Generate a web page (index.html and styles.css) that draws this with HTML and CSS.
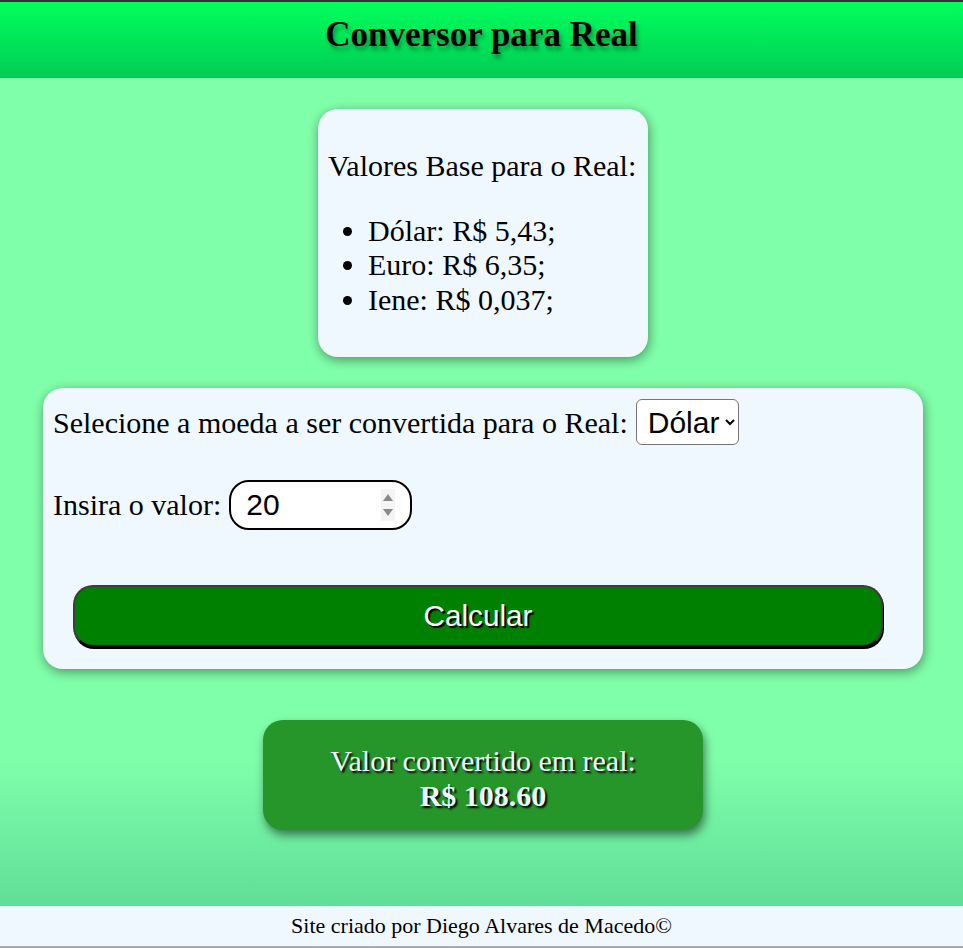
FILE: index.html
```
<!DOCTYPE html>
<html lang="pt-BR">
<head>
<meta charset="utf-8">
<title>Conversor para Real</title>
<link rel="stylesheet" href="styles.css">
</head>
<body>
<header class="topo">
  <h1 class="titulo">Conversor para Real</h1>
</header>
<main class="conteudo">
  <section class="cartao base">
    <p class="base-titulo">Valores Base para o Real:</p>
    <ul class="lista">
      <li>Dólar: R$ 5,43;</li>
      <li>Euro: R$ 6,35;</li>
      <li>Iene: R$ 0,037;</li>
    </ul>
  </section>
  <section class="cartao form">
    <div class="linha">
      <label for="moeda">Selecione a moeda a ser convertida para o Real:</label>
      <select id="moeda" class="seletor">
        <option>Dólar</option>
        <option>Euro</option>
        <option>Iene</option>
      </select>
    </div>
    <div class="linha linha-valor">
      <label for="valor">Insira o valor:</label>
      <span class="campo-wrap">
        <input id="valor" class="campo" type="number" value="20">
        <span class="giro" aria-hidden="true"><i class="seta-cima"></i><i class="seta-baixo"></i></span>
      </span>
    </div>
    <button class="botao" type="button">Calcular</button>
  </section>
  <section class="resultado">
    <div>Valor convertido em real:</div>
    <div class="valor-final">R$ 108.60</div>
  </section>
</main>
<footer class="rodape">Site criado por Diego Alvares de Macedo©</footer>
</body>
</html>
```
FILE: styles.css
```
html, body {
  margin: 0;
  padding: 0;
}
body {
  min-height: 100vh;
  display: flex;
  flex-direction: column;
  font-family: "Liberation Serif", "Times New Roman", serif;
  font-size: 30px;
  line-height: 34.5px;
  color: #000;
  background: #80ffaa;
}
.topo {
  box-sizing: border-box;
  height: 78px;
  border-top: 2px solid #333;
  background: linear-gradient(#00ff5c, #00cc55);
  padding-top: 13px;
  text-align: center;
}
.titulo {
  margin: 0;
  font-size: 35px;
  line-height: 40px;
  font-weight: bold;
  text-shadow: 2px 4px 4px rgba(0, 0, 0, 0.35);
}
.conteudo {
  flex: 1;
  display: flex;
  flex-direction: column;
  align-items: center;
  padding: 31px 0 60px 3px;
  background: linear-gradient(#80ffaa 0, #80ffaa 82%, #60de98 100%);
}
.cartao {
  box-sizing: border-box;
  background: #f0f8ff;
  border-radius: 20px;
  box-shadow: 1px 3px 12px rgba(0, 0, 0, 0.42);
}
.base {
  width: 330px;
  padding: 10px;
}
.base-titulo {
  margin: 30px 0;
}
.lista {
  margin: 30px 0;
  padding-left: 40px;
}
.form {
  width: 880px;
  margin-top: 31px;
  padding: 11px 10px 22px;
}
.linha {
  display: flex;
  align-items: baseline;
  gap: 8px;
}
.linha-valor {
  margin-top: 35px;
}
.seletor {
  height: 46px;
  font-family: "Liberation Sans", Arial, sans-serif;
  font-size: 30px;
  border: 1px solid #767676;
  border-radius: 6px;
  background: #fff;
  padding: 0 2px 0 7px;
  color: #000;
}
.campo-wrap {
  position: relative;
  display: inline-flex;
}
.campo {
  box-sizing: border-box;
  width: 183px;
  height: 50px;
  border: 2px solid #000;
  border-radius: 20px;
  padding: 0 12px 0 15px;
  font-family: "Liberation Sans", Arial, sans-serif;
  font-size: 30px;
  background: #fff;
  color: #000;
}
.giro {
  position: absolute;
  left: 152px;
  top: 9px;
  width: 14px;
  height: 32px;
  background: #f4f4f4;
  display: flex;
  flex-direction: column;
  align-items: center;
  justify-content: space-between;
  padding: 5px 0;
  box-sizing: border-box;
}
.seta-cima {
  width: 0;
  height: 0;
  border-left: 5px solid transparent;
  border-right: 5px solid transparent;
  border-bottom: 7px solid #8a8a8a;
}
.seta-baixo {
  width: 0;
  height: 0;
  border-left: 5px solid transparent;
  border-right: 5px solid transparent;
  border-top: 7px solid #8a8a8a;
}
.botao {
  display: block;
  box-sizing: border-box;
  width: 810px;
  height: 62px;
  margin: 55px 0 0 20px;
  background: #008000;
  color: #fff;
  border: 2px solid #3d3d3d;
  border-bottom-color: #000;
  box-shadow: 1px 2px 0 #000;
  border-radius: 20px;
  font-family: "Liberation Sans", Arial, sans-serif;
  font-size: 29.7px;
  text-shadow: 2px 2px 1px #000;
}
.resultado {
  box-sizing: border-box;
  width: 440px;
  margin-top: 51px;
  padding: 24px 10px 17px;
  background: #26962a;
  border-radius: 20px;
  box-shadow: 2px 5px 10px rgba(0, 0, 0, 0.5);
  color: #f0f8ff;
  text-align: center;
  text-shadow: 2px 2px 2px #000;
}
.valor-final {
  font-weight: bold;
}
.rodape {
  box-sizing: border-box;
  height: 42px;
  padding-top: 7px;
  background: #f0f8ff;
  border-bottom: 2px solid #aaa;
  text-align: center;
  font-size: 22px;
  line-height: 25px;
}
```
